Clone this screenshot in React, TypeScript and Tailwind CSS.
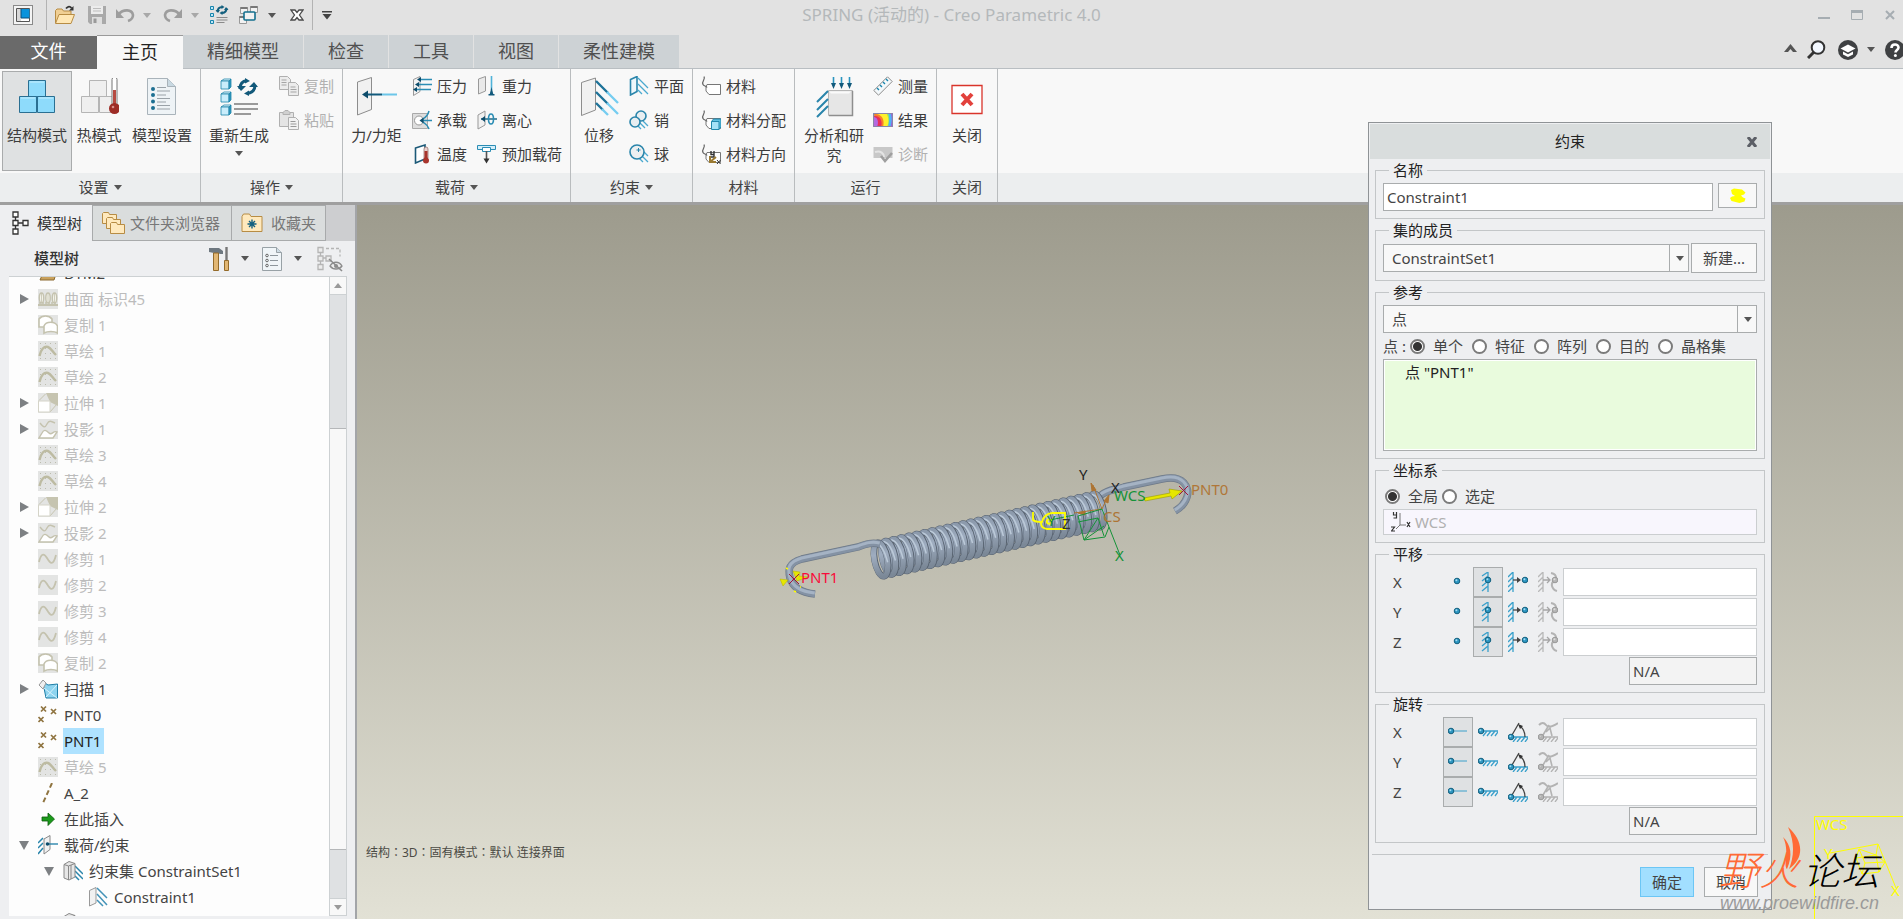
import { useState, type ReactNode } from 'react'
import clsx from 'clsx'

type IconProps = { className?: string }

function Caret({ className = 'h-[5px] w-2 text-[#555]' }: IconProps) {
  return (
    <svg viewBox="0 0 8 5" className={clsx('shrink-0', className)} fill="currentColor">
      <path d="M0 0h8L4 5z" />
    </svg>
  )
}

/* ---------- title bar icons ---------- */

function AppIcon() {
  return (
    <svg viewBox="0 0 20 20" className="size-5">
      <rect x=".5" y=".5" width="19" height="19" fill="#f4f4f4" stroke="#8a8a8a" />
      <path d="M3.500 3.500h13v13h-13z" fill="#fff" stroke="#555" />
      <path d="M4 4h4v12H4z" fill="#d8d8d8" />
      <path d="M8 4h8.500v9H8z" fill="#0a93dc" />
      <path d="M8 4v9h8" fill="none" stroke="#0b4f7d" />
    </svg>
  )
}

function OpenIcon() {
  return (
    <svg viewBox="0 0 20 20" className="size-5">
      <path d="M.5 18V5.500l1.500-1.500h5l1.500 2H16v4" fill="#f0cf94" stroke="#b78c44" />
      <path d="M.5 18.500 4 9.500h15.500l-3.500 9z" fill="#ffe7b5" stroke="#b78c44" />
      <path d="M11 3.500c2-2.500 4-2.500 5.500-.5" fill="none" stroke="#333" strokeWidth="1.800" />
      <path d="M18.500 1v4.500H14z" fill="#333" />
    </svg>
  )
}

function SaveIcon() {
  return (
    <svg viewBox="0 0 20 20" className="size-5">
      <path d="M1 1h18v18H3l-2-2z" fill="#a9a9a9" />
      <path d="M4 1h12v8H4z" fill="#ececec" />
      <path d="M6 3.500h8M6 6h8" stroke="#bdbdbd" />
      <path d="M5 12h10v7H5z" fill="#dedede" />
      <path d="M6.500 13.500h3V18h-3z" fill="#999" />
    </svg>
  )
}

function UndoIcon({ className }: IconProps) {
  return (
    <svg viewBox="0 0 20 16" className={clsx('h-4 w-5', className)} fill="none" stroke="#9d9d9d">
      <path d="M4 7c4-5 13-5 14 1 0 3-2 5-5 6" strokeWidth="2.600" />
      <path d="M1 2v9h8z" fill="#9d9d9d" stroke="none" />
    </svg>
  )
}

function RegenSmallIcon() {
  return (
    <svg viewBox="0 0 20 20" className="size-5">
      <g fill="#bfe6f7" stroke="#1785ad">
        <path d="M1.500 1.500h3v3h-3zM1.500 8.500h3v3h-3zM1.500 15.500h3v3h-3z" />
      </g>
      <path d="M7.500 12.500h11M7.500 15h11M7.500 17.500h8" stroke="#8a8a8a" />
      <path d="M8.500 7c0-3 2-5 5-5M17.500 3c0 3-2 5-5 5" fill="none" stroke="#14607f" strokeWidth="2" />
      <path d="M6.500 5h4.500l-2 3zM19.500 5H15l2-3z" fill="#14607f" />
      <path d="M12.500 0v4l3-2zM13.500 6v4l-3-2z" fill="#14607f" />
    </svg>
  )
}

function WindowsIcon() {
  return (
    <svg viewBox="0 0 20 20" className="size-5" fill="#f2f2f2">
      <path d="M1.500 2.500h7v6h-7zM11.500 1.500h7v6h-7zM.5 11.500h7v7h-7z" stroke="#999" />
      <path d="M1.500 3h7M11.500 2h7M.5 12h7" stroke="#777" strokeWidth="2" />
      <rect x="5" y="7" width="11" height="8" rx="1" stroke="#14708f" strokeWidth="1.600" />
    </svg>
  )
}

function CloseXIcon() {
  return (
    <svg viewBox="0 0 14 14" className="size-[14px]">
      <path d="M1 2h4l2 2.500L9 2h4L9.500 7l3.500 5H9L7 9.500 5 12H1l3.500-5z" fill="#fff" stroke="#4a4a4a" strokeWidth="1.300" />
    </svg>
  )
}

/* ---------- ribbon icons ---------- */

function Cubes({ blue, thermo }: { blue?: boolean; thermo?: boolean }) {
  return (
    <svg viewBox="0 0 40 38" className="h-[38px] w-10">
      <g fill={blue ? '#8edbfb' : '#efefef'} stroke={blue ? '#2a6f92' : '#b5b5b5'}>
        <path d={blue ? 'M11.500 2.500h17v16h-17z' : 'M10.500 2.500h17v16h-17z'} />
        <path d="M2.500 18.500h17v16h-17zM20.500 18.500h17v16h-17z" />
      </g>
      {blue && <path d="M13 4h14M4 20h14M22 20h14" stroke="#c6effe" />}
      {thermo && (
        <g>
          <path d="M33 1.500a2.500 2.500 0 0 1 5 0V27h-5z" fill="#fff" stroke="#777" />
          <path d="M34 12h3v15h-3z" fill="#b64b42" />
          <circle cx="35.500" cy="30.500" r="5.500" fill="#9d2c26" />
          <circle cx="34" cy="29" r="1.300" fill="#d98d88" />
        </g>
      )}
    </svg>
  )
}

function ModelSetupIcon() {
  return (
    <svg viewBox="0 0 32 38" className="h-[38px] w-8">
      <path d="M1.500.5h20l8 8v28h-28z" fill="#eef3f6" stroke="#a9b3ba" />
      <path d="M21.500.5v8h8" fill="#c9d9e2" stroke="#a9b3ba" />
      <path d="M11 9.500h9M11 13h13M11 17h9M11 20.500h13M11 24h9M11 27.500h13M11 31h13" stroke="#9aa2a8" />
      <g fill="#1c6f92">
        <circle cx="7" cy="11" r="2" />
        <circle cx="7" cy="17" r="2" />
        <circle cx="7" cy="23.500" r="2" />
        <circle cx="7" cy="30" r="2" />
      </g>
    </svg>
  )
}

function RegenIcon() {
  return (
    <svg viewBox="0 0 38 38" className="size-[38px]">
      {[1, 14, 27].map((y) => (
        <g key={y} stroke="#1f86ab" strokeWidth=".8">
          <path d={`M1 ${y + 2}l3-2h7l-2 2z`} fill="#e8f8fe" />
          <path d={`M1 ${y + 2}h8v8H1z`} fill="#c9edfb" />
          <path d={`M9 ${y + 2}l2-2v8l-2 2z`} fill="#2f95bb" />
        </g>
      ))}
      <path d="M14 26h24M14 31h24M14 36h17" stroke="#9a9a9a" strokeWidth="2" />
      <path d="M20 11c0-5 2-8 7-8.500M35 7c0 5-3 8-8 8.500" fill="none" stroke="#12597a" strokeWidth="3" />
      <path d="M17 8h9l-5 5zM38 9h-9l5-5zM25 0v5.500l5-2.500zM29 12.500V18l-5-2.500z" fill="#12597a" />
    </svg>
  )
}

function CopyIcon() {
  return (
    <svg viewBox="0 0 20 20" className="size-5" fill="#ececec" stroke="#b0b0b0">
      <path d="M.5.5h8l3 3v10H.5z" />
      <path d="M9.500 6.500h7l3 3v10h-10z" />
      <path d="M2.500 4h5M2.500 6.500h5M2.500 9h5M11.500 11h5M11.500 13.500h6M11.500 16h6" stroke="#a5a5a5" />
    </svg>
  )
}

function PasteIcon() {
  return (
    <svg viewBox="0 0 20 20" className="size-5" fill="#e4e4e4" stroke="#b0b0b0">
      <path d="M.5 2.500h14v14H.5z" />
      <path d="M4 2.500 6 .5h3l2 2v2H4z" fill="#d0d0d0" />
      <path d="M9.500 7.500h7l3 3v9h-10z" fill="#f2f2f2" />
      <path d="M11.500 11.500h5M11.500 14h6M11.500 16.500h6" stroke="#999" />
    </svg>
  )
}

function ForceIcon() {
  return (
    <svg viewBox="0 0 42 40" className="h-10 w-[42px]">
      <path d="M1.500 5 15.500.5v32L1.500 38z" fill="#f1f1f1" stroke="#8d8d8d" />
      <path d="M10 17.500h16" stroke="#125a7c" strokeWidth="2" />
      <path d="M26 17.500h15" stroke="#6cc6e9" strokeWidth="2" />
      <path d="m6 17.500 6-4v8z" fill="#0e4c6b" />
    </svg>
  )
}

function DisplacementIcon() {
  return (
    <svg viewBox="0 0 40 40" className="size-10">
      <path d="M2.500 5.500 16.500 1v32L2.500 38.500z" fill="#f1f1f1" stroke="#8d8d8d" />
      <g strokeWidth="2.400">
        <path d="m17 4 12 12M17 15l12 12M17 26l7 7" stroke="#1e7399" />
        <path d="m28 15 11 11M28 26l11 11M23 32l6 6" stroke="#76cdf0" />
      </g>
    </svg>
  )
}

function PressureIcon() {
  return (
    <svg viewBox="0 0 20 20" className="size-5">
      <path d="M1.500 3.500 8 .5v15l-6.500 4z" fill="#f3f3f3" stroke="#999" />
      <path d="M8 3.500h12M6 8.500h14M4 13.500h15" stroke="#2b8db4" strokeWidth="1.300" />
      <path d="m5 3.500 4-2.500v5zM3 8.500 7 6v5zM1 13.500 5 11v5z" fill="#0e4c6b" />
    </svg>
  )
}

function BearingIcon() {
  return (
    <svg viewBox="0 0 20 20" className="size-5">
      <path d="M.5 3.500h15v15H.5z" fill="#dedede" stroke="#aaa" />
      <circle cx="7" cy="10.500" r="4.500" fill="#fff" stroke="#999" />
      <path d="M17 1c-1 4-3 6-6 8M20 10.500H10M17 19c-1-3-3-5-6-7" fill="none" stroke="#2b8db4" strokeWidth="1.500" />
      <path d="m7.500 10.500 4-3v6z" fill="#0e4c6b" />
    </svg>
  )
}

function TemperatureIcon() {
  return (
    <svg viewBox="0 0 20 20" className="size-5">
      <path d="M3.500 4 13 1v14l-9.500 4z" fill="#fff" stroke="#1d5a78" strokeWidth="1.600" />
      <path d="M12 5a2 2 0 0 1 4 0v9h-4z" fill="#e9d0cd" stroke="#8f6a66" strokeWidth=".7" />
      <path d="M12.500 7h3v8h-3z" fill="#a8352d" />
      <circle cx="14" cy="16.500" r="3" fill="#a8352d" />
    </svg>
  )
}

function GravityIcon() {
  return (
    <svg viewBox="0 0 20 20" className="size-5">
      <path d="M1.500 3 8.500.5v14.500l-7 3z" fill="#e9e9e9" stroke="#999" />
      <path d="M14.500 0v14" stroke="#4fb3d9" strokeWidth="1.600" />
      <path d="m14.500 11 2 8h-4zM11.500 18h6v1.500h-6z" fill="#125a7c" />
    </svg>
  )
}

function CentrifugalIcon() {
  return (
    <svg viewBox="0 0 20 20" className="size-5">
      <path d="M1 5 8 1v14l-7 4z" fill="#f1f1f1" stroke="#999" />
      <path d="M4 9h16" stroke="#14607f" strokeWidth="1.400" />
      <ellipse cx="14" cy="9" rx="2.500" ry="5" fill="none" stroke="#2b8db4" strokeWidth="1.600" />
      <path d="m4 9 4-3v6z" fill="#0e4c6b" />
    </svg>
  )
}

function PreloadIcon() {
  return (
    <svg viewBox="0 0 20 20" className="size-5">
      <path d="M.5 1.500h18v4H.5z" fill="#d5effa" stroke="#2b8db4" />
      <path d="M5.500 3.500h8v4h-8z" fill="#fff" stroke="#2b8db4" />
      <path d="M9.500 7v9" stroke="#555" strokeWidth="1.600" />
      <path d="M6.500 14.500h6l-3 5z" fill="#333" />
    </svg>
  )
}

function PlanarIcon() {
  return (
    <svg viewBox="0 0 20 20" className="size-5">
      <path d="M1.500 3.500 8 .5v15L1.500 19z" fill="#eef7fb" stroke="#2a85ab" strokeWidth="1.600" />
      <path d="m9 2 10 10M9 8l10 10M9 14l4 4" stroke="#4aa9cf" strokeWidth="1.300" />
    </svg>
  )
}

function PinIcon() {
  return (
    <svg viewBox="0 0 20 20" className="size-5">
      <path d="m10 12 6 6M14 11l5 5M8 15l4 4" stroke="#4aa9cf" strokeWidth="1.300" />
      <circle cx="12" cy="6" r="5" fill="#e8eef1" stroke="#2a85ab" strokeWidth="1.600" />
      <circle cx="6" cy="12" r="5" fill="#e8eef1" stroke="#2a85ab" strokeWidth="1.600" />
    </svg>
  )
}

function BallIcon() {
  return (
    <svg viewBox="0 0 20 20" className="size-5">
      <path d="m13 12 6 6M15 8l4 4M10 14l4 4" stroke="#4aa9cf" strokeWidth="1.300" />
      <circle cx="8" cy="8" r="7" fill="#edf0f1" stroke="#2a85ab" strokeWidth="1.600" />
      <path d="M9.500 4v4M7.500 6h4" stroke="#2a85ab" />
    </svg>
  )
}

function MaterialIcon({ kind }: { kind: 'plain' | 'assign' | 'orient' }) {
  return (
    <svg viewBox="0 0 20 20" className="size-5">
      <path d="M6 8.500h13.500v10H8l-3-3.500v-4z" fill="#fff" stroke="#777" />
      <path d="M3 .5c2 3-3 5-1 8 1 2 3 1 4 3" fill="none" stroke="#666" strokeWidth="1.300" />
      {kind === 'assign' && (
        <g stroke="#2289ae">
          <path d="m10.500 11.500 2-2.500h7.500v8l-2 2.500" fill="#5fbfe0" />
          <path d="M10.500 11.500h7.500v8h-7.500z" fill="#a5e2f8" />
        </g>
      )}
      {kind === 'orient' && (
        <g fill="none">
          <path d="M10 7v3.500h3M13 7v6h-3" stroke="#333" strokeWidth="1.400" />
          <path d="M9 12v6h6M9 18l6-5" stroke="#9a7a32" strokeWidth="2" />
          <path d="m16 16 3.500 4m0-4L16 20" stroke="#333" />
        </g>
      )}
    </svg>
  )
}

function AnalysisIcon() {
  return (
    <svg viewBox="0 0 40 42" className="h-[42px] w-10">
      <path d="M14.500 14.500h24v25h-24z" fill="#e6e6e6" stroke="#b5b5b5" />
      <path d="M15 15.500h22l-2 2H17z" fill="#fafafa" />
      <path d="M38.500 15v24.500H15" fill="none" stroke="#8e8e8e" strokeWidth="1.500" />
      <path d="M19.500 1v8M27.500 1v8M35.500 1v8" stroke="#2a94bf" strokeWidth="1.600" />
      <path d="M17 7h5l-2.500 6zM25 7h5l-2.500 6zM33 7h5l-2.500 6z" fill="#125a7c" />
      <path d="M3 26 14 15M3 34l11-11M3 41l11-11" stroke="#2a85ab" strokeWidth="2" />
    </svg>
  )
}

function MeasureIcon() {
  return (
    <svg viewBox="0 0 20 20" className="size-5">
      <path d="M.8 14.500 14.500.8l4.700 4.700L5.500 19.200z" fill="#f4f8fa" stroke="#8b8b8b" />
      <path d="m4 12 2 2M7 9l2 2M10 6l2 2M13 3l2 2" stroke="#1785ad" strokeWidth="1.400" />
    </svg>
  )
}

function ResultIcon({ disabled }: { disabled?: boolean }) {
  if (disabled) {
    return (
      <svg viewBox="0 0 20 20" className="size-5">
        <path d="M.5 3h19v11H.5z" fill="#c8c8c8" />
        <path d="M2 8c6-2 9 2 9 5" fill="none" stroke="#e4e4e4" strokeWidth="2" />
        <path d="m8 12 4 5 7-8" fill="none" stroke="#9f9f9f" strokeWidth="2.600" />
      </svg>
    )
  }
  return (
    <svg viewBox="0 0 20 14" className="h-[14px] w-5">
      <path d="M0 0h20v14H0z" fill="#a25bd8" />
      <path d="M0 0h17.500c2 5 1 10 0 14H0z" fill="#4db4f5" />
      <path d="M2 0h13c2 5 1 10 0 14H4z" fill="#9be85a" />
      <path d="M2 0h11c3 4 3 10 1 14H4z" fill="#fff02c" />
      <path d="M1 1c8-1 11 6 9 13H4z" fill="#f9802a" />
      <path d="M1 3c6-1 9 5 7 11H3z" fill="#e8305a" />
      <path d="M0 4c5 0 6 5 4 10H0z" fill="#b46ae0" />
      <path d="M.5.5h19v13H.5z" fill="none" stroke="#8b86a6" />
    </svg>
  )
}

function CloseRedIcon() {
  return (
    <svg viewBox="0 0 32 40" className="h-10 w-8">
      <path d="M1 8.500h30v28H1z" fill="#fff" stroke="#d9342b" strokeWidth="1.300" />
      <path d="m11 17 10 11m0-11L11 28" stroke="#e2413c" strokeWidth="4" />
    </svg>
  )
}

/* ---------- model tree icons ---------- */

function TreeStructIcon() {
  return (
    <svg viewBox="0 0 18 24" className="h-6 w-[18px]" fill="#fff" stroke="#333" strokeWidth="1.300">
      <path d="M3.500 5v14M3.500 12H12" />
      <path d="M1 1h5v5H1zM1 9.500h5v5H1zM1 18h5v5H1zM11 9.500h5v5h-5z" />
    </svg>
  )
}

function FoldersIcon() {
  return (
    <svg viewBox="0 0 24 24" className="size-6" fill="#ffe9bd" stroke="#b78c44">
      <path d="M.5 12.500v-10l1-1h5l1 2h7v9z" />
      <path d="M4.500 17.500v-10l1-1h5l1 2h7v9z" />
      <path d="M8.500 22.500v-10l1-1h5l1 2h7v9z" />
    </svg>
  )
}

function FavoritesIcon() {
  return (
    <svg viewBox="0 0 22 20" className="h-5 w-[22px]">
      <path d="M1 18.500v-15L2.500 1h6L10 3.500h11v15z" fill="#ffe9bd" stroke="#b78c44" />
      <path d="M11 6.500v9M6.500 11h9M8 8l6 6M14 8l-6 6" stroke="#14607f" strokeWidth="1.400" />
    </svg>
  )
}

function ToolsIcon() {
  return (
    <svg viewBox="0 0 20 26" className="h-[26px] w-5">
      <path d="M0 2h10l4 3v3h-3l-2-1H5L0 6z" fill="#6e7880" />
      <path d="M4.500 7h5v17.500h-5z" fill="#e2b774" stroke="#946b2a" />
      <path d="M17.500 1v13" stroke="#777" strokeWidth="2.400" />
      <path d="M15.500 14.500h4v10h-4z" fill="#e2b774" stroke="#946b2a" />
    </svg>
  )
}

function ListDocIcon() {
  return (
    <svg viewBox="0 0 20 26" className="h-[26px] w-5">
      <path d="M.5 1.500h14l5 5v18H.5z" fill="#f0f5f8" stroke="#98a1a6" />
      <path d="M14.500 1.500v5h5" fill="#cfdde5" stroke="#98a1a6" />
      <path d="M8 9.500h8M8 14.500h8M8 19.500h8" stroke="#8d969c" />
      <g fill="none" stroke="#666">
        <circle cx="5" cy="9.500" r="1.300" />
        <circle cx="5" cy="14.500" r="1.300" />
        <circle cx="5" cy="19.500" r="1.300" />
      </g>
    </svg>
  )
}

function HideTreeIcon() {
  return (
    <svg viewBox="0 0 26 26" className="size-[26px]" fill="#ececec" stroke="#b5b5b5" strokeWidth="1.300">
      <path d="M3.500 4v18M3.500 12H12" />
      <path d="M1 1.500h5v5H1zM1 10h5v5H1zM1 18.500h5v5H1zM9 10h5v5H9z" />
      <path d="M9 2.500h14v8" fill="none" strokeDasharray="3 2" />
      <path d="M13 20c3-5 9-5 12 0-3 4-9 4-12 0z" stroke="#8c8c8c" />
      <circle cx="19" cy="20" r="2" fill="#8c8c8c" stroke="none" />
      <path d="m12 13 13 12" stroke="#8c8c8c" strokeWidth="1.600" />
    </svg>
  )
}

type TreeKind =
  | 'plane' | 'pattern' | 'copy' | 'sketch' | 'extrude' | 'project' | 'trim'
  | 'sweep' | 'points' | 'axis' | 'insert' | 'loads' | 'set' | 'constraint'

const treeDrawings: Record<TreeKind, ReactNode> = {
  plane: <path d="M2 17h14l3-9H6z" fill="#c9a15c" stroke="#8b6b33" />,
  pattern: (
    <g fill="#f3f3ec" stroke="#c4c2ae" strokeWidth="1.400">
      <path d="M0 16h20" strokeWidth="2" />
      <path d="M1 14h18" strokeDasharray="2 1" />
      <ellipse cx="3.500" cy="9" rx="2.200" ry="5" />
      <ellipse cx="10" cy="9" rx="2.200" ry="5" />
      <ellipse cx="16.500" cy="9" rx="2.200" ry="5" />
      <path d="M3.500 4v10M10 4v10M16.500 4v10" strokeWidth=".8" />
    </g>
  ),
  copy: (
    <g fill="#fff" stroke="#c4c2ae" strokeWidth="1.600">
      <path d="M1 12V4c3-4 10-4 13 0v8z" />
      <path d="M6 18v-7c2-5 11-5 13.500 0v7c-3-2-10-2-13.500 0z" />
    </g>
  ),
  sketch: (
    <g fill="none" stroke="#bdbba2">
      <path d="M2.500 2v18M7.500 2v18M12.500 2v18M17.500 2v18" strokeDasharray="1 4" stroke="#bcbcae" />
      <path d="M1.500 15C3 8 6 5 10 6c3 1 4 4 8 8" strokeWidth="2.400" />
    </g>
  ),
  extrude: (
    <g>
      <path d="M8 0h12v13L12 9z" fill="#c6c4b0" />
      <path d="M1 7.500 7.500 1M12 7.500 18 2M12 19l7-8" stroke="#c6c4b0" />
      <path d="M.5 8h11.500v11H.5z" fill="#fff" stroke="#d5d4c8" />
    </g>
  ),
  project: (
    <g fill="none" stroke="#c4c2ae" strokeWidth="1.400">
      <path d="M2 4c4 5 5 5 7 1s4-3 8-1" />
      <path d="M1 19h14l4-6c-4-2-5 4-8 1s-5-4-7 0z" fill="#fff" />
    </g>
  ),
  trim: <path d="M1 13C3 4 6 4 9 9s6 9 9-3" fill="none" stroke="#c4c2ae" strokeWidth="1.800" />,
  sweep: (
    <g stroke="#1f7ea6">
      <path d="m4 2 6 4 9.500-1v14H8L6 9z" fill="#8ed4ef" />
      <path d="m6 9 13 10M19 6 8 18" stroke="#d8f2fc" />
      <path d="m1 6 4-5 3 3-3 6z" fill="#f0f0f0" stroke="#999" />
    </g>
  ),
  points: (
    <path
      d="m3 1.500 5 5m0-5-5 5M13 4l5 5m0-5-5 5M.5 12l5 5m0-5-5 5"
      stroke="#8f7440"
      strokeWidth="1.700"
    />
  ),
  axis: <path d="M14 0 5 20" stroke="#8f7440" strokeWidth="2" strokeDasharray="5 3" />,
  insert: <path d="M4 8h6V4l6.500 6-6.500 6.500V12H4z" fill="#1b9a1b" stroke="#0b5c0b" strokeWidth=".8" />,
  loads: (
    <g>
      <path d="m0 8 5-5M0 13l5-5M0 19l5-6" stroke="#2a85ab" strokeWidth="1.500" />
      <path d="M6 4 12 .5v14L6 19z" fill="#f1f1f1" stroke="#888" />
      <path d="M9 9h11" stroke="#2a85ab" strokeWidth="1.400" />
      <circle cx="9.500" cy="9" r="1.800" fill="#0e4c6b" />
    </g>
  ),
  set: (
    <g>
      <path d="M12 5l8 8M12 10l8 8M12 15l4 4" stroke="#2a85ab" strokeWidth="1.500" />
      <path d="M1 3.500 6 .5l6 2V16l-6 3-5-2z" fill="#e6e6e6" stroke="#888" />
      <path d="M5.500 5v14M5.500 5 12 2.500M1 3.500 5.500 5M8 4v14" stroke="#888" fill="none" />
    </g>
  ),
  constraint: (
    <g>
      <path d="M1.500 3.500 8 .5V16l-6.500 3z" fill="#f1f1f1" stroke="#999" />
      <path d="m9 1 10 10M9 7l10 11M9 13l6 6" stroke="#4393b8" strokeWidth="1.500" />
    </g>
  ),
}

type TreeNode = { label: string; kind: TreeKind; level?: number; open?: boolean; dim?: boolean; branch?: boolean }

const treeNodes: TreeNode[] = [
  { label: 'DTM2', kind: 'plane' },
  { label: '曲面 标识45', kind: 'pattern', dim: true, branch: true },
  { label: '复制 1', kind: 'copy', dim: true },
  { label: '草绘 1', kind: 'sketch', dim: true },
  { label: '草绘 2', kind: 'sketch', dim: true },
  { label: '拉伸 1', kind: 'extrude', dim: true, branch: true },
  { label: '投影 1', kind: 'project', dim: true, branch: true },
  { label: '草绘 3', kind: 'sketch', dim: true },
  { label: '草绘 4', kind: 'sketch', dim: true },
  { label: '拉伸 2', kind: 'extrude', dim: true, branch: true },
  { label: '投影 2', kind: 'project', dim: true, branch: true },
  { label: '修剪 1', kind: 'trim', dim: true },
  { label: '修剪 2', kind: 'trim', dim: true },
  { label: '修剪 3', kind: 'trim', dim: true },
  { label: '修剪 4', kind: 'trim', dim: true },
  { label: '复制 2', kind: 'copy', dim: true },
  { label: '扫描 1', kind: 'sweep', branch: true },
  { label: 'PNT0', kind: 'points' },
  { label: 'PNT1', kind: 'points' },
  { label: '草绘 5', kind: 'sketch', dim: true },
  { label: 'A_2', kind: 'axis' },
  { label: '在此插入', kind: 'insert' },
  { label: '载荷/约束', kind: 'loads', branch: true, open: true },
  { label: '约束集 ConstraintSet1', kind: 'set', level: 1, branch: true, open: true },
  { label: 'Constraint1', kind: 'constraint', level: 2 },
  { label: '', kind: 'set', level: 1 },
]

const indents = ['pl-0', 'pl-[25px]', 'pl-[50px]']

function TreeRow({ node, selected, onSelect }: { node: TreeNode; selected: boolean; onSelect: () => void }) {
  return (
    <li className={clsx('flex h-[26px] items-center', indents[node.level ?? 0])}>
      <span className="flex w-[29px] shrink-0 justify-center">
        {node.branch && (
          <svg viewBox="0 0 10 10" className={clsx('size-[10px] text-[#7d8083]', node.open && 'rotate-90')} fill="currentColor">
            <path d="M1 0v10l9-5z" />
          </svg>
        )}
      </span>
      <svg viewBox="0 0 20 20" className={clsx('mr-[5px] size-5 shrink-0', node.dim && 'bg-[#e3e4e3]')}>
        {treeDrawings[node.kind]}
      </svg>
      {node.label && (
        <button
          type="button"
          onClick={onSelect}
          className={clsx(
            'h-[26px] px-px whitespace-nowrap',
            selected ? 'bg-[#aee2ff] pr-[3px] text-[#222]' : node.dim ? 'text-[#bcbcbc]' : 'text-[#444]'
          )}
        >
          {node.label}
        </button>
      )}
    </li>
  )
}

/* ---------- layout pieces ---------- */

function TitleBar() {
  return (
    <header className="grid h-[35px] grid-cols-[1fr_auto_1fr] items-start bg-[#e2e2e2]">
      <div className="flex h-[30px] items-center">
        <button type="button" aria-label="Creo" className="ml-[13px]"><AppIcon /></button>
        <span className="mr-2 ml-[13px] h-full w-px bg-[#b3b3b3]" />
        <button type="button" aria-label="打开"><OpenIcon /></button>
        <button type="button" aria-label="保存" className="ml-3"><SaveIcon /></button>
        <button type="button" aria-label="撤消" className="ml-2 flex items-center gap-2">
          <UndoIcon />
          <Caret className="h-[5px] w-2 text-[#a8a8a8]" />
        </button>
        <button type="button" aria-label="重做" className="ml-3 flex items-center gap-2">
          <UndoIcon className="-scale-x-100" />
          <Caret className="h-[5px] w-2 text-[#a8a8a8]" />
        </button>
        <button type="button" aria-label="重新生成" className="ml-[10px]"><RegenSmallIcon /></button>
        <button type="button" aria-label="窗口" className="ml-[10px] flex items-center gap-[9px]">
          <WindowsIcon />
          <Caret />
        </button>
        <button type="button" aria-label="关闭窗口" className="ml-[14px]"><CloseXIcon /></button>
        <span className="ml-2 h-full w-px bg-[#b3b3b3]" />
        <button type="button" aria-label="自定义" className="ml-[9px]">
          <svg viewBox="0 0 10 9" className="h-[9px] w-[10px]" fill="#444">
            <path d="M0 0h10v1.500H0zM.5 3h9L5 8.500z" />
          </svg>
        </button>
      </div>
      <h1 className="text-[17px] leading-[30px] text-[#b4b8ba]">SPRING (活动的) - Creo Parametric 4.0</h1>
      <div className="flex h-[30px] items-center justify-end gap-[21px] pr-[7px] text-[#a6adb2]">
        <button type="button" aria-label="最小化">
          <svg viewBox="0 0 12 12" className="size-3"><path d="M0 9h12" stroke="currentColor" strokeWidth="2" /></svg>
        </button>
        <button type="button" aria-label="最大化">
          <svg viewBox="0 0 12 12" className="size-3" fill="none" stroke="currentColor">
            <path d="M.5 1.500h11v9H.5z" />
            <path d="M0 2.500h12" strokeWidth="3" />
          </svg>
        </button>
        <button type="button" aria-label="关闭">
          <svg viewBox="0 0 12 12" className="size-3"><path d="m2 2 8 8m0-8-8 8" stroke="currentColor" strokeWidth="2" /></svg>
        </button>
      </div>
    </header>
  )
}

const tabs = ['主页', '精细模型', '检查', '工具', '视图', '柔性建模']

function TabBar() {
  const [active, setActive] = useState('主页')
  return (
    <nav className="flex h-[34px] items-end border-b border-[#b9bec2] bg-[#e2e2e2] text-[18px] leading-6 text-[#505050]">
      <button type="button" className="-mb-px h-[33px] w-[97px] bg-[#6a6a6a] pb-1 text-white">文件</button>
      {tabs.map((tab) => (
        <button
          key={tab}
          type="button"
          onClick={() => setActive(tab)}
          className={clsx(
            'pb-[2px]',
            tab === active
              ? '-mb-px h-[34px] border-t border-[#9a9a9a] bg-[#f8f8f8] px-[25px] text-[#222]'
              : 'h-[33px] border-r border-[#e2e2e2] bg-[#cdd2d5] px-6'
          )}
        >
          {tab}
        </button>
      ))}
      <div className="ml-auto flex h-full items-center pb-2">
        <button type="button" aria-label="最小化功能区" className="mr-[10px]">
          <svg viewBox="0 0 13 8" className="h-2 w-[13px]"><path d="M0 8 6.500 0 13 8H9L6.500 5 4 8z" fill="#555" /></svg>
        </button>
        <button type="button" aria-label="搜索" className="mt-1 mr-3">
          <svg viewBox="0 0 19 19" className="size-[19px]">
            <path d="m1 18 6-6" stroke="#333" strokeWidth="3" />
            <circle cx="11" cy="7.500" r="6.300" fill="#f3f8ff" stroke="#333" strokeWidth="2" />
          </svg>
        </button>
        <button type="button" aria-label="学习" className="mt-1 flex items-center gap-[9px]">
          <svg viewBox="0 0 20 20" className="size-5">
            <circle cx="10" cy="10" r="10" fill="#3f4143" />
            <path d="m2.500 8.500 7.500-4 7.500 4-7.500 4z" fill="#fff" />
            <path d="M5 11.500v3l5 2.500 5-2.500v-3l-5 2.800z" fill="#fff" />
          </svg>
          <Caret />
        </button>
        <button type="button" aria-label="帮助" className="mt-1 -mr-[2px] ml-[10px]">
          <svg viewBox="0 0 20 20" className="size-5">
            <circle cx="10" cy="10" r="10" fill="#3f4143" />
            <path d="M6.500 8c0-4.500 7-4.500 7-.5 0 2.500-3 2.500-3 5" fill="none" stroke="#fff" strokeWidth="2.600" />
            <circle cx="10.400" cy="15.500" r="1.500" fill="#fff" />
          </svg>
        </button>
      </div>
    </nav>
  )
}

function RibbonGroup({ title, menu, className, children }: { title: string; menu?: boolean; className?: string; children: ReactNode }) {
  return (
    <section className={clsx('flex shrink-0 flex-col border-r border-[#b9bcbe]', className)}>
      <div className="flex h-[104px]">{children}</div>
      <h2 className="flex h-[29px] items-center justify-center gap-[5px] bg-[#eceeef] text-[#444]">
        {title}
        {menu && <Caret />}
      </h2>
    </section>
  )
}

function BigButton({ icon, label, pressed, menu, className }: { icon: ReactNode; label: string; pressed?: boolean; menu?: boolean; className?: string }) {
  return (
    <button
      type="button"
      className={clsx(
        'my-[2px] flex h-[100px] flex-col items-center border pt-[3px] leading-5 text-[#3c3c3c]',
        pressed ? 'border-[#a9abac] bg-[#dfe1e2]' : 'border-transparent',
        className
      )}
    >
      <span className="mb-[7px] flex h-[43px] items-center">{icon}</span>
      {label}
      {menu && <Caret className="mt-[6px] h-[5px] w-2 text-[#555]" />}
    </button>
  )
}

function SmallButton({ icon, label, disabled }: { icon: ReactNode; label: string; disabled?: boolean }) {
  return (
    <button
      type="button"
      disabled={disabled}
      className={clsx('flex h-[34px] items-center gap-[5px] whitespace-nowrap', disabled ? 'text-[#b1b1b1]' : 'text-[#3c3c3c]')}
    >
      {icon}
      {label}
    </button>
  )
}

function Ribbon() {
  return (
    <div className="flex border-b-[3px] border-[#9f9f9f] bg-[#f8f8f8]">
      <RibbonGroup title="设置" menu className="w-[201px]">
        <BigButton icon={<Cubes blue />} label="结构模式" pressed className="ml-[2px] w-[70px]" />
        <BigButton icon={<Cubes thermo />} label="热模式" className="w-[54px]" />
        <BigButton icon={<ModelSetupIcon />} label="模型设置" className="w-[72px]" />
      </RibbonGroup>
      <RibbonGroup title="操作" menu className="w-[142px]">
        <BigButton icon={<RegenIcon />} label="重新生成" menu className="w-[76px]" />
        <div className="ml-[2px]">
          <SmallButton icon={<CopyIcon />} label="复制" disabled />
          <SmallButton icon={<PasteIcon />} label="粘贴" disabled />
        </div>
      </RibbonGroup>
      <RibbonGroup title="载荷" menu className="w-[228px]">
        <BigButton icon={<ForceIcon />} label="力/力矩" className="w-[67px]" />
        <div className="ml-[2px]">
          <SmallButton icon={<PressureIcon />} label="压力" />
          <SmallButton icon={<BearingIcon />} label="承载" />
          <SmallButton icon={<TemperatureIcon />} label="温度" />
        </div>
        <div className="ml-[10px]">
          <SmallButton icon={<GravityIcon />} label="重力" />
          <SmallButton icon={<CentrifugalIcon />} label="离心" />
          <SmallButton icon={<PreloadIcon />} label="预加载荷" />
        </div>
      </RibbonGroup>
      <RibbonGroup title="约束" menu className="w-[122px]">
        <BigButton icon={<DisplacementIcon />} label="位移" className="w-14" />
        <div className="ml-[2px]">
          <SmallButton icon={<PlanarIcon />} label="平面" />
          <SmallButton icon={<PinIcon />} label="销" />
          <SmallButton icon={<BallIcon />} label="球" />
        </div>
      </RibbonGroup>
      <RibbonGroup title="材料" className="w-[102px]">
        <div className="ml-2">
          <SmallButton icon={<MaterialIcon kind="plain" />} label="材料" />
          <SmallButton icon={<MaterialIcon kind="assign" />} label="材料分配" />
          <SmallButton icon={<MaterialIcon kind="orient" />} label="材料方向" />
        </div>
      </RibbonGroup>
      <RibbonGroup title="运行" className="w-[142px]">
        <BigButton icon={<AnalysisIcon />} label="分析和研究" className="ml-[7px] w-[64px]" />
        <div className="ml-[7px]">
          <SmallButton icon={<MeasureIcon />} label="测量" />
          <SmallButton icon={<ResultIcon />} label="结果" />
          <SmallButton icon={<ResultIcon disabled />} label="诊断" disabled />
        </div>
      </RibbonGroup>
      <RibbonGroup title="关闭" className="w-[61px]">
        <BigButton icon={<CloseRedIcon />} label="关闭" className="w-[60px]" />
      </RibbonGroup>
      <div className="flex flex-1 flex-col justify-end">
        <div className="h-[29px] bg-[#eceeef]" />
      </div>
    </div>
  )
}

function ModelTree() {
  const [selected, setSelected] = useState('PNT1')
  return (
    <aside className="flex w-[357px] shrink-0 flex-col border-r-2 border-[#a3a5a8] bg-[#eeeff1]">
      <div className="flex h-9 bg-[#cdced0] text-[#777]">
        <button type="button" className="flex w-[92px] items-center gap-[7px] bg-[#eeeff1] pl-3 text-[#333]">
          <TreeStructIcon />
          模型树
        </button>
        <button type="button" className="flex w-[140px] items-center gap-1 border border-[#a8aaab] bg-[#dadddd] pl-[9px]">
          <FoldersIcon />
          文件夹浏览器
        </button>
        <button type="button" className="flex w-[94px] items-center gap-2 border border-l-0 border-[#a8aaab] bg-[#dadddd] pl-[9px]">
          <FavoritesIcon />
          收藏夹
        </button>
      </div>
      <div className="flex h-[35px] items-center pr-3 pl-[34px]">
        <h2 className="font-medium text-[#333]">模型树</h2>
        <button type="button" aria-label="设置" className="ml-auto flex items-center gap-3">
          <ToolsIcon />
          <Caret />
        </button>
        <button type="button" aria-label="显示" className="ml-[13px] flex items-center gap-3">
          <ListDocIcon />
          <Caret />
        </button>
        <button type="button" aria-label="隐藏树" className="ml-[15px]"><HideTreeIcon /></button>
      </div>
      <div className="mr-2 mb-[3px] ml-[9px] flex min-h-0 flex-1 border-t border-[#cdd1d3] bg-[#fdfdfd]">
        <div className="min-w-0 flex-1 overflow-hidden">
          <ul className="-mt-[17px]">
            {treeNodes.map((node, i) => (
              <TreeRow key={i} node={node} selected={node.label === selected} onSelect={() => setSelected(node.label)} />
            ))}
          </ul>
        </div>
        <div className="flex w-[18px] flex-col border-x border-[#cdd1d3] bg-[#dfe1e3]">
          <button type="button" aria-label="向上" className="flex h-[18px] items-center justify-center border-b border-[#cdd1d3] bg-[#f8f8f8]">
            <Caret className="h-[5px] w-2 rotate-180 text-[#999]" />
          </button>
          <div className="flex-[134]" />
          <div className="flex-[422] border-y border-[#b5b7b9] bg-[#f8f8f8]" />
          <div className="flex-[48]" />
          <button type="button" aria-label="向下" className="flex h-[18px] items-center justify-center border-y border-[#cdd1d3] bg-[#f8f8f8]">
            <Caret className="h-[5px] w-2 text-[#999]" />
          </button>
        </div>
      </div>
    </aside>
  )
}

/* ---------- 3D viewport ---------- */

const coilCount = 29
const coils = Array.from({ length: coilCount }, (_, i) => {
  const t = (coilCount - 1 - i) / (coilCount - 1)
  return { x: 121 + t * 216, y: 109.5 - t * 49 }
})

function Tube({ d }: { d: string }) {
  return (
    <g fill="none">
      <path d={d} stroke="#6d7988" strokeWidth="7.500" />
      <path d={d} stroke="#8492a4" strokeWidth="6.300" />
      <path d={d} stroke="#a5b3c4" strokeWidth="3" transform="translate(-.3 -1)" />
    </g>
  )
}

function Spring() {
  return (
    <svg viewBox="0 0 490 160" className="absolute top-[245px] left-[403px] h-40 w-[490px]">
      <defs>
        <linearGradient id="coil" x1="0" y1="0" x2="0" y2="1">
          <stop offset="0" stopColor="#8c9aac" />
          <stop offset=".35" stopColor="#9fadc0" />
          <stop offset="1" stopColor="#7b8897" />
        </linearGradient>
      </defs>
      <Tube d="M340 46C346 40 354 40 364 37L402 29C424 24 430 38 427 47Q424 56 415 61" />
      {coils.map((c) => (
        <g key={c.x} fill="none" transform={`rotate(-11 ${c.x} ${c.y})`}>
          <ellipse cx={c.x} cy={c.y} rx="6.500" ry="17" stroke="#56616f" strokeWidth="6.600" />
          <ellipse cx={c.x - 0.3} cy={c.y} rx="6.500" ry="17" stroke="url(#coil)" strokeWidth="5.400" />
          <path
            d={`M${c.x - 2} ${c.y - 17}Q${c.x + 5} ${c.y - 14} ${c.x + 6} ${c.y + 4}`}
            stroke="#bccad9"
            strokeWidth="1.500"
          />
        </g>
      ))}
      <Tube d="M120 94C112 92 106 94 98 97L42 109C28 113 28 120 30 128Q34 142 55 144" />

      <g fill="#e6e600">
        <path d="m384 48 26-5-1-4 13 2-10 8-1-3-26 5z" stroke="#9c9c00" strokeWidth=".6" />
        <path d="m20 129 8 1-5 6zM33 121l7 1-1 4 9 1-11 4z" stroke="#b3b300" strokeWidth=".5" />
      </g>
      <path d="m26 118 2 1M34 141l2 1M40 137h1" stroke="#ffff00" strokeWidth="1.500" />
      <g stroke="#a3143a">
        <path d="m419 36 9 9m0-9-9 9M29 124l10 10m0-10-10 10" />
      </g>

      <g fill="none" stroke="#ad7433">
        <path d="m333 35 9 24M347 48l-5 11-28 4" />
        <path d="m331 33 5 7-4 1zM349 45l-1 8-4-2zM318 63l7-2v4z" fill="#ad7433" />
      </g>
      <g fill="none" stroke="#159238">
        <path d="m290 70 24-5M342 59l-24 7 6 24 21-3 4-10-7-18zM324 90l14-22M318 72l20-4 6 18M349 77l11 28M324 90l20-14" />
      </g>
      <g fill="none" stroke="#ffff00" strokeWidth="1.800">
        <path d="M273 62v8q2 2 9 2 2-8 10-9h13v16h-18q-6-1-6-6" />
        <circle cx="289" cy="71.500" r="2.200" />
      </g>
      <g fontSize="15" className="font-['Noto_Sans']">
        <text x="319" y="30" fill="#222">Y</text>
        <text x="351" y="43" fill="#222">X</text>
        <text x="302" y="79" fill="#333">Z</text>
        <text x="287" y="76" fill="#159238">Y</text>
        <text x="355" y="111" fill="#159238">X</text>
        <text x="354" y="51" fill="#159238">WCS</text>
        <text x="343" y="72" fill="#ad7433">CS</text>
        <text x="431" y="45" fill="#b07638">PNT0</text>
        <text x="41" y="133" fill="#f80c3a">PNT1</text>
      </g>
    </svg>
  )
}

function WcsInset() {
  return (
    <svg viewBox="0 0 89 103" className="absolute right-0 bottom-0 h-[103px] w-[89px]" fill="none" stroke="#ffff00">
      <path d="M.5 103V.5H89" />
      <path d="m16 37 48-9 18 44M45 33l17 6 9 7-6 10-17 2-6-16zM42 42l20-3 3 17M45 33l6 14 20-1M51 47l-3 11M62 39l2-11" />
      <g fontSize="15" fill="#ffff00" stroke="none" className="font-['Noto_Sans']">
        <text x="2" y="14">WCS</text>
        <text x="10" y="43">Y</text>
        <text x="77" y="80">X</text>
      </g>
    </svg>
  )
}

function Viewport() {
  return (
    <main className="relative min-w-0 flex-1 overflow-hidden bg-linear-to-b from-[#9d9b8d] to-[#e2e1d5]">
      <Spring />
      <p className="absolute bottom-[58px] left-[9px] font-['Noto_Sans','Noto_Sans_CJK_TC',sans-serif] text-[12px] leading-4 text-[#4b4b45]">
        结构：3D：固有模式：默认 连接界面
      </p>
      <WcsInset />
    </main>
  )
}

/* ---------- constraint dialog ---------- */

function Fieldset({ legend, children }: { legend: string; children: ReactNode }) {
  return (
    <fieldset className="mx-[6px] mb-px min-w-0 border border-[#c3c6c8] px-[7px] pt-[3px] pb-[7px]">
      <legend className="ml-[6px] h-5 px-1 leading-5 text-[#222]">{legend}</legend>
      {children}
    </fieldset>
  )
}

function Combo({ label, options, className }: { label: string; options: string[]; className?: string }) {
  return (
    <div className={clsx('relative', className)}>
      <select aria-label={label} className="h-7 w-full appearance-none border border-[#a9acad] bg-[#f8f8f8] pr-6 pl-2 text-[#444]">
        {options.map((o) => (
          <option key={o}>{o}</option>
        ))}
      </select>
      <span className="pointer-events-none absolute inset-y-0 right-0 flex w-5 items-center justify-center border-l border-[#a9acad]">
        <Caret />
      </span>
    </div>
  )
}

function Radio({ name, label, checked, onChange, className }: { name: string; label: string; checked: boolean; onChange: () => void; className?: string }) {
  return (
    <label className={clsx('flex items-center gap-2', className)}>
      <input
        type="radio"
        name={name}
        checked={checked}
        onChange={onChange}
        className="size-[15px] appearance-none rounded-full border-2 border-[#7b7b7b] bg-white checked:bg-[radial-gradient(circle,#333_0,#333_4px,#fff_5px)]"
      />
      {label}
    </label>
  )
}

const hatch = 'M10 0v20M4 4l6-4M4 9l6-5M4 14l6-5M4 19l6-5'

function Ball({ x, y, gray }: { x: number; y: number; gray?: boolean }) {
  return (
    <g>
      <circle cx={x} cy={y} r="2.800" fill={gray ? '#b5b5b5' : '#2c95c0'} stroke={gray ? '#999' : '#14607f'} />
      <circle cx={x - 0.6} cy={y - 0.8} r="1" fill={gray ? '#ddd' : '#a5dcf2'} />
    </g>
  )
}

const translationModes = [
  { name: '自由', drawing: <Ball x={9} y={9} /> },
  {
    name: '固定',
    drawing: (
      <g>
        <path d={hatch} stroke="#3aa0cb" strokeWidth="1.300" />
        <Ball x={10} y={8} />
      </g>
    ),
  },
  {
    name: '指定',
    drawing: (
      <g>
        <path d="M5 0v20M0 5l5-5M0 10l5-5M0 15l5-5M0 20l5-5" stroke="#3aa0cb" strokeWidth="1.300" />
        <path d="M5 8h5" stroke="#444" strokeWidth="1.300" />
        <path d="m9 5 4 3-4 3z" fill="#444" />
        <Ball x={17} y={8} />
      </g>
    ),
  },
  {
    name: '坐标函数',
    disabled: true,
    drawing: (
      <g fill="none">
        <path d="M5 0v20M0 5l5-5M0 10l5-5M0 15l5-5M0 20l5-5" stroke="#b9b9b9" strokeWidth="1.300" />
        <path d="M5 8h6M9 5l3 3-3 3" stroke="#a5a5a5" strokeWidth="1.300" />
        <path d="M13 1q6 1 5 7-5 2-4 6 1 4 5 5" stroke="#b3b3b3" strokeWidth="2" />
        <Ball x={17} y={8} gray />
      </g>
    ),
  },
]

const rotationModes = [
  {
    name: '自由',
    drawing: (
      <g>
        <path d="M4 9h15" stroke="#3aa0cb" />
        <Ball x={3} y={9} />
      </g>
    ),
  },
  {
    name: '固定',
    drawing: (
      <g>
        <path d="M3 9h17M9 9l-4 5M13 9l-4 5M17 9l-4 5M20 10l-3 4" stroke="#3aa0cb" strokeWidth="1.300" />
        <Ball x={3} y={9} />
      </g>
    ),
  },
  {
    name: '指定',
    drawing: (
      <g fill="none">
        <path d="M3 15h17M9 15l-4 5M13 15l-4 5M17 15l-4 5M20 16l-3 4" stroke="#3aa0cb" strokeWidth="1.300" />
        <path d="m4 13 7-12M12 4q5 4 5 11" stroke="#444" strokeWidth="1.300" />
        <path d="m10 2 5 2-3 3z" fill="#333" />
        <Ball x={3} y={15} />
      </g>
    ),
  },
  {
    name: '坐标函数',
    disabled: true,
    drawing: (
      <g fill="none" stroke="#b3b3b3">
        <path d="M3 15h17M9 15l-4 5M13 15l-4 5M17 15l-4 5M20 16l-3 4" strokeWidth="1.300" />
        <path d="M1 3q4-4 7 0t12-2" strokeWidth="2" />
        <path d="m5 13 6-10M8 10l4-4 2 8" strokeWidth="1.600" />
        <Ball x={3} y={15} gray />
      </g>
    ),
  },
]

type Mode = { name: string; disabled?: boolean; drawing: ReactNode }

function AxisRows({ group, modes, initial }: { group: string; modes: Mode[]; initial: number }) {
  const [active, setActive] = useState([initial, initial, initial])
  return (
    <>
      {['X', 'Y', 'Z'].map((axis, row) => (
        <div key={axis} className="flex h-[30px] items-center">
          <label htmlFor={`${group}-${axis}`} className="w-[60px] shrink-0 pl-[10px]">
            {axis}
          </label>
          {modes.map((mode, i) => (
            <button
              key={mode.name}
              type="button"
              aria-label={`${axis} ${mode.name}`}
              disabled={mode.disabled}
              onClick={() => setActive(active.map((a, r) => (r === row ? i : a)))}
              className={clsx(
                'flex size-[30px] shrink-0 items-center justify-center',
                active[row] === i && 'border border-[#a9acad] bg-[#dfe1e3]'
              )}
            >
              <svg viewBox="0 0 20 20" className="size-5 shrink-0">{mode.drawing}</svg>
            </button>
          ))}
          <input id={`${group}-${axis}`} type="text" className="h-7 w-0 min-w-0 flex-1 border border-[#cbced0] bg-white px-1" />
        </div>
      ))}
      <input
        type="text"
        aria-label={`${group} 单位`}
        readOnly
        value="N/A"
        className="ml-auto block h-7 w-32 border border-[#a9acad] bg-[#f3f3f3] px-[3px]"
      />
    </>
  )
}

const pointKinds = ['单个', '特征', '阵列', '目的', '晶格集']

function ConstraintDialog() {
  const [name, setName] = useState('Constraint1')
  const [pointKind, setPointKind] = useState('单个')
  const [csys, setCsys] = useState('全局')

  return (
    <div
      role="dialog"
      aria-label="约束"
      className="absolute top-[122px] right-[131px] w-[404px] border border-[#8f9396] bg-[#eeeff1] text-[#444]"
    >
      <header className="relative m-px mb-px flex h-[35px] items-center justify-center bg-[#d9dddd] text-[#222]">
        <h2>约束</h2>
        <button type="button" aria-label="关闭" className="absolute right-[13px]">
          <svg viewBox="0 0 10 10" className="size-[10px]"><path d="m1 0 8 10M9 0 1 10" stroke="#5c5f66" strokeWidth="3" /></svg>
        </button>
      </header>

      <Fieldset legend="名称">
        <div className="flex items-start gap-[5px]">
          <input
            type="text"
            aria-label="名称"
            value={name}
            onChange={(e) => setName(e.target.value)}
            className="h-7 min-w-0 flex-1 border border-[#a9acad] bg-white px-[3px]"
          />
          <button type="button" aria-label="颜色" className="flex h-[25px] w-[39px] items-center justify-center border border-[#a9acad] bg-[#f8f8f8]">
            <svg viewBox="0 0 16 16" className="size-4">
              <path d="M1 2 4 .5l8 1 3.500 3-1.500 2-3 1 2 2 2.500 1-1 3-5 1.500-4-1-4-1-1.500-3 2-1.500L5 8 2 6z" fill="#ffff00" />
            </svg>
          </button>
        </div>
      </Fieldset>

      <Fieldset legend="集的成员">
        <div className="flex items-center gap-[2px]">
          <Combo label="集的成员" options={['ConstraintSet1']} className="flex-1" />
          <button type="button" className="h-[30px] w-[66px] border border-[#a9acad] bg-[#f8f8f8]">新建...</button>
        </div>
      </Fieldset>

      <Fieldset legend="参考">
        <Combo label="参考" options={['点']} />
        <div className="flex h-[26px] items-center">
          <span className="w-[27px] whitespace-nowrap">点 :</span>
          {pointKinds.map((kind) => (
            <Radio
              key={kind}
              name="pointKind"
              label={kind}
              checked={pointKind === kind}
              onChange={() => setPointKind(kind)}
              className="mr-[9px]"
            />
          ))}
        </div>
        <ul className="h-[92px] border border-[#a9acad] bg-[#e9fbdd] pl-[21px] text-[#222] inset-ring inset-ring-white">
          <li className="leading-6">点 "PNT1"</li>
        </ul>
      </Fieldset>

      <Fieldset legend="坐标系">
        <div className="flex h-[26px] items-center gap-1 pl-[2px]">
          {['全局', '选定'].map((kind) => (
            <Radio key={kind} name="csys" label={kind} checked={csys === kind} onChange={() => setCsys(kind)} />
          ))}
        </div>
        <div className="flex h-[26px] items-center gap-1 border border-[#cbced0] bg-[#f8f6fd] pl-[7px] text-[#b0b0b0]">
          <svg viewBox="0 0 20 20" className="size-5" fill="none" stroke="#777">
            <path d="M9 1v12h6M9 13l-4 4" />
            <path d="M2.500 0v3h3V0M5.500 3v3h-3M16 10l3 5m0-5-3 5M0 15h3.500L.5 19H4" stroke="#333" strokeWidth="1.200" />
          </svg>
          WCS
        </div>
      </Fieldset>

      <Fieldset legend="平移">
        <AxisRows group="平移" modes={translationModes} initial={1} />
      </Fieldset>

      <Fieldset legend="旋转">
        <AxisRows group="旋转" modes={rotationModes} initial={0} />
      </Fieldset>

      <footer className="mx-[3px] mt-[11px] flex justify-end gap-[10px] border-t border-[#c3c6c8] py-3 pr-[10px]">
        <button type="button" className="h-[30px] w-[54px] border border-[#6cc6f5] bg-[#a2dfff]">确定</button>
        <button type="button" className="h-[30px] w-[54px] border border-[#a9acad] bg-[#f8f8f8]">取消</button>
      </footer>
    </div>
  )
}

function Watermark() {
  return (
    <div className="pointer-events-none absolute right-6 bottom-[6px] flex flex-col items-end">
      <div className="relative flex items-end gap-1 leading-[46px] font-light italic">
        <span className="text-[40px] text-[#ff6a35]">野火</span>
        <span className="text-[38px] text-black">论坛</span>
        <svg viewBox="0 0 20 44" className="absolute -top-[20px] left-[62px] h-11 w-5" fill="#ff6a35">
          <path d="M7 0c14 12 18 30 1 42 4-10 7-24-1-42z" />
          <path d="M2 10c8 8 10 18 4 32-4-4 3-18-4-32z" />
        </svg>
      </div>
      <p className="font-['Liberation_Sans'] text-[18px] leading-5 text-[#9a9a9a] italic">www.proewildfire.cn</p>
    </div>
  )
}

export default function App() {
  return (
    <div className="relative flex h-screen flex-col overflow-hidden bg-[#e2e2e2] font-['Noto_Sans','Noto_Sans_CJK_SC',sans-serif] text-[15px]">
      <TitleBar />
      <TabBar />
      <Ribbon />
      <div className="flex min-h-0 flex-1">
        <ModelTree />
        <Viewport />
      </div>
      <ConstraintDialog />
      <Watermark />
    </div>
  )
}
